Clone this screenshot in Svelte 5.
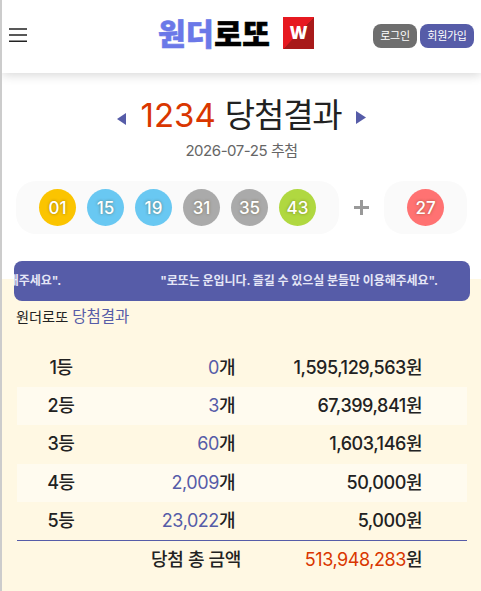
<script lang="ts">
  export let round = 1234;
  export let date = '2026-07-25';

  const balls = [
    { no: '01', color: 'yellow' },
    { no: '15', color: 'blue' },
    { no: '19', color: 'blue' },
    { no: '31', color: 'gray' },
    { no: '35', color: 'gray' },
    { no: '43', color: 'green' },
  ];
  const bonus = '27';

  const prizes = [
    { rank: 1, count: 0, amount: 1595129563 },
    { rank: 2, count: 3, amount: 67399841 },
    { rank: 3, count: 60, amount: 1603146 },
    { rank: 4, count: 2009, amount: 50000 },
    { rank: 5, count: 23022, amount: 5000 },
  ];
  const total = 513948283;

  const notice = '"로또는 운입니다. 즐길 수 있으실 분들만 이용해주세요".';

  const comma = (n: number) => n.toLocaleString('en-US');
</script>

<div class="page">
  <header>
    <button class="menu" aria-label="메뉴">
      <svg width="18" height="15" viewBox="0 0 18 15">
        <path d="M0 .9h18M0 7h18M0 13.2h18" stroke="#222" stroke-width="1.5" />
      </svg>
    </button>
    <div class="logo">
      <span class="logo-text"><em>원더</em>로또</span>
      <span class="mark">W</span>
    </div>
    <nav>
      <button class="login">로그인</button>
      <button class="join">회원가입</button>
    </nav>
  </header>

  <section class="result">
    <div class="title">
      <svg class="prev" width="9" height="12" viewBox="0 0 9 12"><path d="M9 0v12L0 6z" /></svg>
      <h1><span>{round}</span> 당첨결과</h1>
      <svg class="next" width="10" height="13" viewBox="0 0 10 13"><path d="M0 0v13l10-6.5z" /></svg>
    </div>
    <p class="date">{date} 추첨</p>
    <div class="balls">
      <div class="group">
        {#each balls as ball}
          <span class="ball {ball.color}">{ball.no}</span>
        {/each}
      </div>
      <svg class="plus" width="15" height="15" viewBox="0 0 15 15"><path d="M0 7.5h15M7.5 0v15" /></svg>
      <div class="group bonus">
        <span class="ball red">{bonus}</span>
      </div>
    </div>
  </section>

  <div class="notice">
    <div class="track">
      <span>{notice}</span>
      <span>{notice}</span>
    </div>
  </div>

  <section class="prizes">
    <h2>원더로또 <span>당첨결과</span></h2>
    <div class="table">
      {#each prizes as prize}
        <div class="row">
          <span class="rank">{prize.rank}등</span>
          <span class="count"><i>{comma(prize.count)}</i>개</span>
          <span class="amount">{comma(prize.amount)}원</span>
        </div>
      {/each}
      <div class="row total">
        <span class="label">당첨 총 금액</span>
        <span class="amount"><i>{comma(total)}</i>원</span>
      </div>
    </div>
  </section>
</div>

<style>
  :global(body) {
    background: #fff;
  }

  .page {
    box-sizing: border-box;
    height: 591px;
    border-left: 2px solid #ccc;
    display: flex;
    flex-direction: column;
    overflow: hidden;
    font-family: Inter, 'Noto Sans CJK KR', sans-serif;
    color: #222;
  }

  h1, h2, p {
    margin: 0;
    font-weight: 400;
  }

  em, i {
    font-style: normal;
  }

  svg {
    display: block;
    flex: none;
  }

  button {
    border: 0;
    padding: 0;
    background: none;
    font: inherit;
  }

  header {
    flex: none;
    height: 73px;
    box-sizing: border-box;
    padding: 0 7px;
    display: grid;
    grid-template-columns: 149px 1fr auto;
    box-shadow: 0 2px 10px rgba(0, 0, 0, 0.16);
  }

  .menu {
    align-self: start;
    margin-top: 28px;
  }

  .logo {
    display: flex;
    align-items: flex-start;
    padding-top: 17px;
  }

  .logo-text {
    width: 125px;
    font-size: 30px;
    font-weight: 900;
    line-height: 34px;
    letter-spacing: 0.5px;
    color: #000;
    white-space: nowrap;
    -webkit-text-stroke: 0.6px;
  }

  .logo-text em {
    color: #6b78e8;
  }

  .mark {
    width: 31px;
    height: 32px;
    background: linear-gradient(134deg, #e61920 50%, #a81a1a 50.5%);
    font: 800 17px/31px 'Open Sans', sans-serif;
    text-align: center;
    color: #fff;
  }

  nav {
    display: flex;
    gap: 3px;
    padding-top: 24px;
  }

  nav button {
    height: 24px;
    border-radius: 8px;
    font-size: 11px;
    line-height: 22px;
    color: #fff;
    letter-spacing: -0.3px;
  }

  .login {
    width: 44px;
    background: #6e6e6e;
  }

  .join {
    width: 54px;
    background: #565ca8;
  }

  .result {
    flex: none;
    height: 188px;
  }

  .title {
    display: flex;
    justify-content: center;
    padding-top: 18px;
    height: 50px;
  }

  h1 {
    margin: 0 15px;
    font-size: 33px;
    line-height: 48px;
    letter-spacing: -1.2px;
    white-space: nowrap;
  }

  h1 span {
    margin-right: 1px;
    letter-spacing: 0;
    color: #d93600;
  }

  .title svg {
    fill: #565ca8;
  }

  .prev {
    margin-top: 22px;
  }

  .next {
    margin-top: 20px;
  }

  .date {
    text-align: center;
    font-size: 15px;
    line-height: 20px;
    color: #666;
    letter-spacing: -0.45px;
  }

  .balls {
    display: flex;
    align-items: center;
    margin: 20px 0 0 14px;
  }

  .group {
    box-sizing: border-box;
    width: 323px;
    height: 53px;
    border-radius: 20px;
    background: #fafafa;
    display: flex;
    align-items: center;
    justify-content: center;
    gap: 11px;
  }

  .group.bonus {
    width: 83px;
  }

  .plus {
    margin: 0 15px;
    stroke: #999;
    stroke-width: 3;
  }

  .ball {
    width: 37px;
    height: 37px;
    border-radius: 50%;
    text-align: center;
    font-size: 17px;
    font-weight: 550;
    line-height: 38px;
    color: #fff;
    text-shadow: 0 0 3px rgba(73, 57, 0, 0.5);
  }

  .yellow { background: #fbc400; }
  .blue { background: #69c8f2; }
  .gray { background: #aaa; }
  .green { background: #b0d840; }
  .red { background: #ff7272; }

  .notice {
    flex: none;
    z-index: 1;
    height: 40px;
    margin: 0 11px 0 12px;
    border-radius: 8px;
    background: #565ca8;
    overflow: hidden;
  }

  .track {
    display: flex;
    justify-content: flex-end;
    gap: 99px;
    padding-right: 32px;
    font-size: 12px;
    font-weight: 700;
    line-height: 39px;
    letter-spacing: -0.06px;
    color: #e5e6f6;
    white-space: nowrap;
  }

  .prizes {
    flex: 1;
    margin-top: -22px;
    padding: 26px 14px 0 15px;
    background: #fff8e3;
  }

  h2 {
    margin-left: -1px;
    font-size: 14.2px;
    line-height: 24px;
    white-space: nowrap;
  }

  h2 span {
    font-size: 15.5px;
    color: #565ca8;
  }

  .table {
    margin-top: 20px;
    font-size: 18px;
    font-weight: 500;
  }

  .row {
    display: grid;
    grid-template-columns: 88px 130px 187px;
    height: 38.2px;
    line-height: 38px;
    white-space: nowrap;
    letter-spacing: -0.45px;
  }

  .row:nth-child(even) {
    background: #fffbef;
  }

  .rank {
    text-align: center;
  }

  .count, .amount, .label {
    text-align: right;
  }

  i {
    font-weight: 400;
    color: #565ca8;
  }

  .row.total {
    grid-template-columns: 224px 181px;
    border-top: 1px solid #565ca8;
    background: none;
  }

  .total .label {
    letter-spacing: -0.35px;
  }

  .total i {
    color: #d93600;
  }
</style>
